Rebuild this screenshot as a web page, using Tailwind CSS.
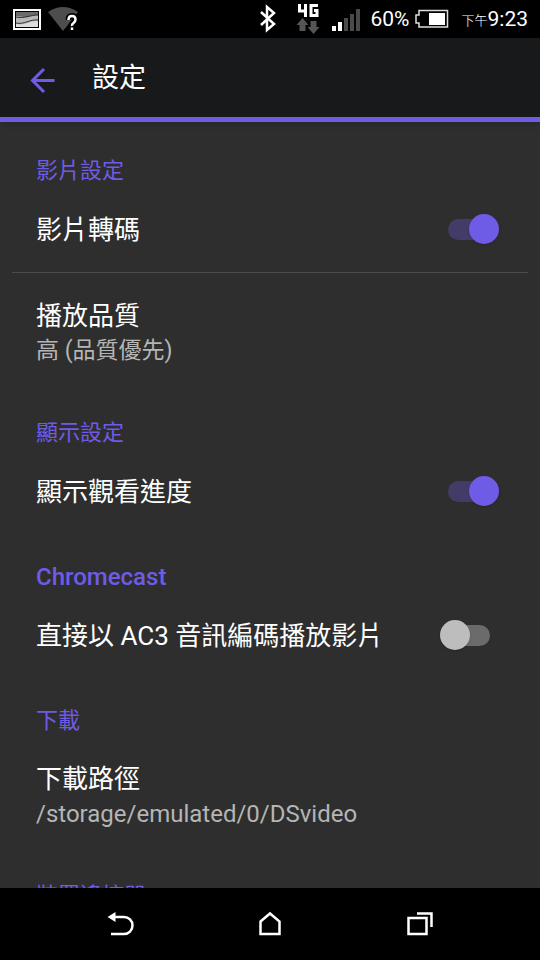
<!DOCTYPE html>
<html lang="zh-Hant">
<head>
  <meta charset="UTF-8" />
  <meta name="viewport" content="width=device-width, initial-scale=1.0" />
  <title>設定</title>
  <script src="https://cdn.jsdelivr.net/npm/@tailwindcss/browser@4"></script>
</head>
<body class="flex h-screen flex-col overflow-hidden bg-[#2e2e2e] font-[Roboto,'Noto_Sans_CJK_TC',sans-serif] text-white">

  <!-- STATUS BAR -->
  <div class="flex h-[38px] shrink-0 items-center justify-between bg-black px-3">
    <div class="flex items-center gap-1">
      <svg class="h-8 w-8" viewBox="0 0 32 32" fill="none">
        <rect x="2" y="7" width="26" height="19" stroke="#fff" stroke-width="2" />
        <rect x="4" y="9" width="22" height="15" fill="#b8b8b8" />
        <path d="M4 9h22v3c-6 0-9 3-14 2l-8-1z" fill="#6b6b6b" />
        <path d="M4 21c8 2 14-3 22-3v6H4z" fill="#ddd" />
        <path d="M4 14c8 2 14-2 22-2M4 20c8 2 14-4 22-3" stroke="#333" />
      </svg>
      <svg class="h-8 w-8" viewBox="0 0 32 32" fill="none">
        <path d="M0 9Q15-1 30 9L15 28z" fill="#4d4d4d" />
        <path d="M20.500 17q0-4 3.500-4t3.500 3.500q0 2-2 3.500t-1.500 3M24 24v3" stroke="#000" stroke-width="6" />
        <path d="M20.500 17q0-4 3.500-4t3.500 3.500q0 2-2 3.500t-1.500 3M24 24.500v2.500" stroke="#fff" stroke-width="2.500" />
      </svg>
    </div>
    <div class="flex items-center">
      <svg class="h-[38px] w-[110px]" viewBox="257 0 110 38" fill="none">
        <path d="M262 12l13 12-7 6V7l7 6-13 12" stroke="#fff" stroke-width="2.500" />
        <path d="M300.500 4v7h6M306.500 4v13M319 5.500h-7v10h6v-5h-3" stroke="#fff" stroke-width="3" />
        <path d="M303.500 18l6 7h-3v6h-6v-6h-3zM314.500 34l-6-7h3v-6h6v6h3z" fill="#555" />
        <path d="M333 26h4v5h-4zM339 22h4v9h-4z" fill="#fff" />
        <path d="M345 18h4v13h-4zM351 14h4v17h-4zM357 9h4v22h-4z" fill="#4a4a4a" />
      </svg>
      <span class="ml-1 text-[21px] leading-[38px]">60%</span>
      <svg class="ml-1 h-[38px] w-9" viewBox="412 0 36 38" fill="none">
        <path d="M418 10.500h28.500v16.500H418v-4h-3v-8h3z" stroke="#ddd" stroke-width="1.500" />
        <path d="M428 13h16v12h-16z" fill="#fff" />
      </svg>
      <span class="ml-3 pt-1 text-[13px] font-light">下午</span>
      <span class="text-[21px] leading-[38px]">9:23</span>
    </div>
  </div>

  <!-- APP BAR -->
  <header class="flex h-[84px] shrink-0 items-center border-b-5 border-[#6e5ce6] bg-[#18191b] px-6 shadow-md">
    <button type="button" aria-label="返回" class="mr-8">
      <svg class="h-9 w-9" viewBox="0 0 36 36" fill="none" stroke="#6e5ce6" stroke-width="3">
        <path d="M20 9L8.500 20.500 20 32M8.500 20.500h22" />
      </svg>
    </button>
    <h1 class="text-[27px] leading-9">設定</h1>
  </header>

  <!-- SETTINGS LIST -->
  <main class="min-h-0 flex-1 overflow-hidden px-3 pt-[6px]">
    <section>
      <h2 class="px-6 pt-7 text-[22px] leading-[30px] text-[#6e5ce6]">影片設定</h2>
      <label class="flex h-[86px] items-center justify-between pt-[2px] pr-7 pl-6">
        <span class="text-[26px] leading-9">影片轉碼</span>
        <span class="relative h-8 w-15">
          <input type="checkbox" checked class="peer sr-only" />
          <span class="absolute top-[5px] left-2 h-[21px] w-[42px] rounded-full bg-[#6b6b6b] peer-checked:bg-[#433b68]"></span>
          <span class="absolute top-0 left-0 size-[30px] rounded-full bg-[#bdbdbd] shadow peer-checked:left-[29px] peer-checked:bg-[#6e5ce6]"></span>
        </span>
      </label>
      <button type="button" class="block w-full border-t border-[#4b4b4b] px-6 pt-[25px] pb-[22px] text-left">
        <span class="block text-[26px] leading-9">播放品質</span>
        <span class="block text-[23px] leading-[34px] text-[#b5b5b5]">高 (品質優先)</span>
      </button>
    </section>

    <section>
      <h2 class="px-6 pt-7 text-[22px] leading-[30px] text-[#6e5ce6]">顯示設定</h2>
      <label class="flex h-[86px] items-center justify-between pt-[2px] pr-7 pl-6">
        <span class="text-[26px] leading-9">顯示觀看進度</span>
        <span class="relative h-8 w-15">
          <input type="checkbox" checked class="peer sr-only" />
          <span class="absolute top-[5px] left-2 h-[21px] w-[42px] rounded-full bg-[#6b6b6b] peer-checked:bg-[#433b68]"></span>
          <span class="absolute top-0 left-0 size-[30px] rounded-full bg-[#bdbdbd] shadow peer-checked:left-[29px] peer-checked:bg-[#6e5ce6]"></span>
        </span>
      </label>
    </section>

    <section>
      <h2 class="px-6 pt-7 text-[24px] leading-[30px] font-medium text-[#6e5ce6]">Chromecast</h2>
      <label class="flex h-[86px] items-center justify-between pt-[2px] pr-7 pl-6">
        <span class="text-[26px] leading-9">直接以 AC3 音訊編碼播放影片</span>
        <span class="relative h-8 w-15">
          <input type="checkbox" class="peer sr-only" />
          <span class="absolute top-[5px] left-2 h-[21px] w-[42px] rounded-full bg-[#6b6b6b] peer-checked:bg-[#433b68]"></span>
          <span class="absolute top-0 left-0 size-[30px] rounded-full bg-[#bdbdbd] shadow peer-checked:left-[29px] peer-checked:bg-[#6e5ce6]"></span>
        </span>
      </label>
    </section>

    <section>
      <h2 class="px-6 pt-7 text-[22px] leading-[30px] text-[#6e5ce6]">下載</h2>
      <button type="button" class="block w-full px-6 pt-[25px] pb-[22px] text-left">
        <span class="block text-[26px] leading-9">下載路徑</span>
        <span class="block text-[24px] leading-[34px] text-[#b5b5b5]">/storage/emulated/0/DSvideo</span>
      </button>
    </section>

    <section>
      <h2 class="px-6 pt-7 text-[22px] leading-[30px] text-[#6e5ce6]">裝置遙控器</h2>
    </section>
  </main>

  <!-- NAVIGATION BAR -->
  <nav class="flex h-[72px] shrink-0 items-center justify-center gap-[114px] bg-black">
    <button type="button" aria-label="上一頁">
      <svg class="h-9 w-9" viewBox="0 0 36 36" fill="none">
        <path d="M11 11h11a8.500 8.500 0 0 1 0 17H9" stroke="#fff" stroke-width="2.500" />
        <path d="M5.500 11l8-5v10z" fill="#fff" />
      </svg>
    </button>
    <button type="button" aria-label="主畫面">
      <svg class="h-9 w-9" viewBox="0 0 36 36" fill="none" stroke="#fff" stroke-width="2.500">
        <path d="M8.500 15.500L18 7.500l9.500 8v12.500h-19z" />
      </svg>
    </button>
    <button type="button" aria-label="最近使用的應用程式">
      <svg class="h-9 w-9" viewBox="0 0 36 36" fill="none" stroke="#fff" stroke-width="2.500">
        <path d="M6.500 12h18v16h-18zM15 7.500h14.500V21" />
      </svg>
    </button>
  </nav>

</body>
</html>
